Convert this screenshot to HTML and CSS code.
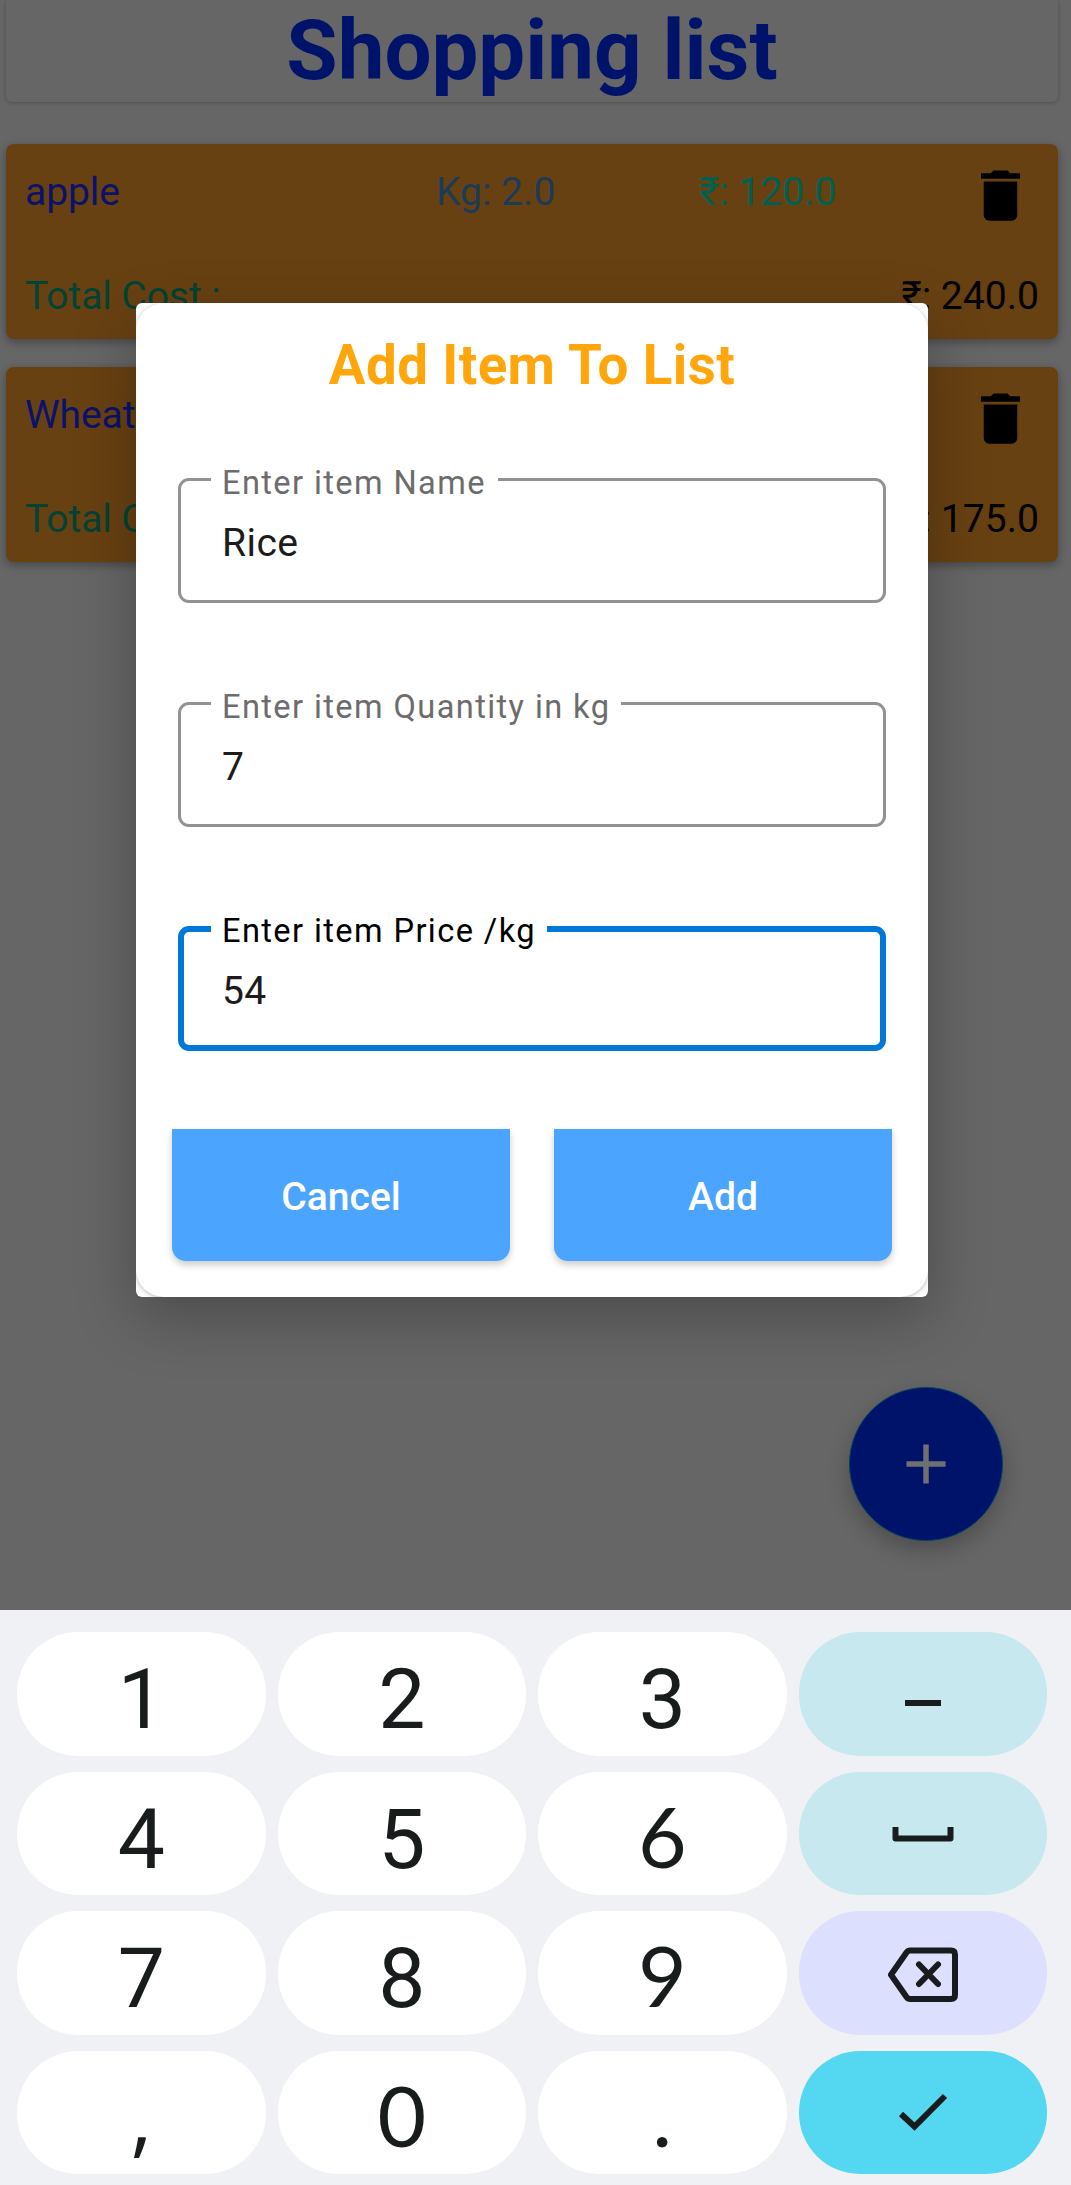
FILE: index.html
```html
<!DOCTYPE html>
<html lang="en">
<head>
<meta charset="utf-8">
<title>Shopping list</title>
<link rel="stylesheet" href="styles.css">
</head>
<body>
<svg class="defs" width="0" height="0" aria-hidden="true">
  <symbol id="trash" viewBox="0 0 24 24"><path d="M6 19c0 1.1.9 2 2 2h8c1.1 0 2-.9 2-2V7H6v12zM19 4h-3.500l-1-1h-5l-1 1H5v2h14V4z"/></symbol>
</svg>
<main class="app">
  <header class="header"><h1>Shopping list</h1></header>
  <section class="items">
    <article class="item">
      <div class="item-row">
        <span class="name">apple</span><span class="qty">Kg: 2.0</span><span class="price">₹: 120.0</span>
        <svg class="trash"><use href="#trash"/></svg>
      </div>
      <div class="item-total"><span>Total Cost :</span><span class="sum">₹: 240.0</span></div>
    </article>
    <article class="item">
      <div class="item-row">
        <span class="name">Wheat</span><span class="qty"></span><span class="price"></span>
        <svg class="trash"><use href="#trash"/></svg>
      </div>
      <div class="item-total"><span>Total Cost :</span><span class="sum">₹: 175.0</span></div>
    </article>
  </section>
  <div class="fab"><svg viewBox="0 0 40 40"><path d="M0.500 20H39.500M20 0.500V39.500"/></svg></div>
  <div class="dialog">
    <div class="sheet">
      <h2>Add Item To List</h2>
      <div class="field"><label class="l1">Enter item Name</label><span>Rice</span></div>
      <div class="field"><label class="l2">Enter item Quantity in kg</label><span>7</span></div>
      <div class="field active"><label class="l3">Enter item Price /kg</label><span>54</span></div>
      <div class="buttons"><button>Cancel</button><button>Add</button></div>
    </div>
  </div>
</main>
<section class="keyboard">
  <div class="key">1</div><div class="key">2</div><div class="key">3</div>
  <div class="key soft"><svg viewBox="0 0 60 60"><path d="M12 38H48"/></svg></div>
  <div class="key">4</div><div class="key">5</div><div class="key lato">6</div>
  <div class="key soft"><svg viewBox="0 0 70 60"><path d="M7.500 22V33.500H62.500V22" stroke-linejoin="round"/></svg></div>
  <div class="key">7</div><div class="key">8</div><div class="key lato">9</div>
  <div class="key erase"><svg viewBox="0 0 70 60"><path d="M22 5.500H63Q67 5.500 67 9.500V50Q67 54 63 54H22Q20 54 18.500 52L3 29.750L18.500 7.500Q20 5.500 22 5.500ZM31 19.500L50 39M50 19.500L31 39" stroke-linecap="round"/></svg></div>
  <div class="key comma">,</div><div class="key lato zero">0</div><div class="key lato">.</div>
  <div class="key enter"><svg viewBox="0 0 60 60"><path d="M8 30L21.500 42.500L52 12"/></svg></div>
</section>
</body>
</html>
```
FILE: styles.css
```css
* { box-sizing: border-box; }
body { margin: 0; width: 1071px; height: 2185px; overflow: hidden; background: #f0f1f4; font-family: Roboto, sans-serif; }
h1, h2 { margin: 0; }
.defs { display: block; }
.app { position: relative; height: 1610px; background: #666; overflow: hidden; font-size: 39.1px; line-height: 46px; }
.header { height: 102px; margin: 0 13px 0 6px; padding-top: 2px; border-radius: 0 0 6px 6px; box-shadow: 0 1px 4px rgba(0,0,0,.22); text-align: center; }
.header h1 { font-size: 83.4px; line-height: 98px; color: #00136b; }
.items { display: flex; flex-direction: column; gap: 28px; padding: 42px 13px 0 6px; }
.item { height: 195px; border-radius: 8px; background: #684112; box-shadow: 0 3px 10px rgba(0,0,0,.33); padding: 18px 19px 0; }
.item-row { display: grid; grid-template-columns: 411px 263px 268px 67px; height: 67px; }
.item-row span { padding-top: 7px; }
.name { color: #0b1269; }
.qty { color: #1b3b57; }
.price { color: #006150; }
.trash { width: 67px; height: 67px; fill: #000; }
.item-total { display: flex; justify-content: space-between; padding-top: 44px; color: #044233; }
.name, .item-total span:first-child { letter-spacing: -.1px; }
.sum { color: #000; }
.fab { position: absolute; left: 849px; top: 1387px; width: 154px; height: 154px; border-radius: 50%; border: 1px solid #00445e; background: #00136b; display: flex; align-items: center; justify-content: center; box-shadow: 0 9px 22px rgba(0,0,0,.25); }
.fab svg { width: 40px; height: 40px; stroke: #707070; stroke-width: 5.5; }
.dialog { position: absolute; left: 136px; top: 303px; width: 792px; height: 994px; border-radius: 6px; background: #fff; box-shadow: 0 20px 60px rgba(0,0,0,.27); overflow: visible; }
.sheet { height: 994px; padding: 30px 42px 0; border-radius: 28px; box-shadow: 0 1px 5px rgba(0,0,0,.28); clip-path: inset(0 round 6px); }
h2 { font-size: 54.7px; line-height: 64px; letter-spacing: .4px; color: #ffa60c; text-align: center; margin-bottom: 81px; }
.field { position: relative; width: 708px; height: 125px; margin-bottom: 99px; border: 3px solid #929292; border-radius: 11px; padding: 39px 0 0 41px; color: #1d1b1b; letter-spacing: .4px; }
.field label { position: absolute; left: 30px; top: -17px; padding-left: 11px; background: #fff; font-size: 32.6px; line-height: 38px; letter-spacing: 1.4px; color: #6c6c6c; white-space: nowrap; }
.l1 { width: 287px; }
.l2 { width: 410px; }
.l3 { width: 336px; }
.field.active { border: 6px solid #0078d7; padding: 36px 0 0 38px; margin-bottom: 78px; }
.field.active label { left: 27px; top: -20px; color: #000; }
.buttons { display: flex; justify-content: space-between; margin: 0 -6px; }
button { width: 338px; height: 132px; border: 0; border-radius: 0 0 14px 14px; background: #4ba5ff; color: #fff; font: 500 39.1px/46px Roboto, sans-serif; padding: 4px 0 0; box-shadow: 0 4px 7px rgba(0,0,0,.2); }
.keyboard { height: 575px; background: #f0f1f4; padding: 22px 24px 11px 17px; display: grid; grid-template-columns: repeat(4, 1fr); grid-template-rows: repeat(4, 1fr); column-gap: 12px; row-gap: 16px; }
.key { border-radius: 61px; background: #fff; color: #191c1c; font-size: 84px; line-height: 98px; padding-top: 19px; text-align: center; overflow: hidden; }
.key svg { display: block; margin: 14px auto 0; height: 60px; fill: none; stroke: #191c1e; stroke-width: 6; }
.lato { font-family: Lato, sans-serif; padding-top: 15px; }
.comma { font-family: "Open Sans", sans-serif; padding-top: 15px; }
.soft { background: #c7e8ee; }
.erase { background: #dddfff; }
.enter { background: #54d7f1; }
.erase svg { margin-top: 15px; }
```
